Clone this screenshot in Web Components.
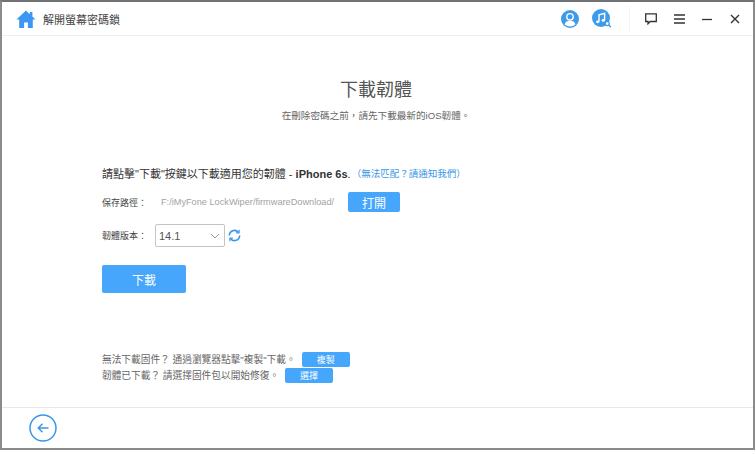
<!DOCTYPE html>
<html>
<head>
<meta charset="utf-8">
<style>
  html, body { margin: 0; background: #fff; }
  body { font-family: "Liberation Sans", "Noto Sans CJK TC", sans-serif; }
</style>
</head>
<body>
<app-window>
  <title-bar slot="top" heading="解開螢幕密碼鎖"></title-bar>
  <firmware-page></firmware-page>
  <page-footer slot="bottom"></page-footer>
</app-window>

<script>
const FONT = '"Liberation Sans", "Noto Sans CJK TC", sans-serif';

class AppWindow extends HTMLElement {
  constructor() {
    super();
    this.attachShadow({mode: 'open'});
    this.shadowRoot.innerHTML = `
    <style>
      :host { display: flex; flex-direction: column; width: 755px; height: 450px; box-sizing: border-box;
        border-top: 2px solid #6f7275; border-left: 2px solid #8b8b8b; border-right: 2px solid #8b8b8b;
        border-bottom: 2px solid #8b8b8b; background: #fff; overflow: hidden; }
      .main { flex: 1; min-height: 0; }
    </style>
    <slot name="top"></slot>
    <div class="main"><slot></slot></div>
    <slot name="bottom"></slot>`;
  }
}

class TitleBar extends HTMLElement {
  constructor() {
    super();
    this.attachShadow({mode: 'open'});
    this.shadowRoot.innerHTML = `
    <style>
      :host { display: flex; align-items: center; height: 34px; box-sizing: border-box; border-bottom: 1px solid #eeeeee;
        padding: 0 13px 0 14px; font-family: ${FONT}; }
      .title { margin-left: 7px; font-size: 11px; color: #444; }
      .grow { flex: 1; }
      svg { display: block; flex: none; }
      .sep { width: 1px; height: 24px; background: #f3f3f3; margin: 0 15px 0 17px; }
    </style>
    <svg width="20" height="18" viewBox="0 0 20 18">
      <path d="M10 .6 .4 9.400h2.800V18h4.900v-5.600h3.800V18h4.900V9.400h2.800L16.400 6.600V2h-2.600v2.200z" fill="#3b97f3"/>
    </svg>
    <span class="title"></span>
    <span class="grow"></span>
    <svg width="18" height="18" viewBox="0 0 18 18">
      <circle cx="9" cy="9" r="9" fill="#3d9bea"/>
      <circle cx="9" cy="6.800" r="3.200" fill="none" stroke="#fff" stroke-width="1.400"/>
      <path d="M3.600 14.400c.6-2.600 2.600-3.600 5.400-3.600s4.800 1 5.400 3.600c-1.500 1.300-3.300 2-5.400 2s-3.900-.7-5.400-2z" fill="#fff"/>
    </svg>
    <span style="width:13px"></span>
    <svg width="20" height="20" viewBox="0 0 20 20">
      <circle cx="9" cy="9" r="9" fill="#3d9bea"/>
      <path d="M7 12.600V5.800l5.600-1.400v6.800" fill="none" stroke="#fff" stroke-width="1.400"/>
      <ellipse cx="5.700" cy="12.800" rx="1.700" ry="1.400" fill="#fff"/>
      <ellipse cx="11.300" cy="11.400" rx="1.700" ry="1.400" fill="#fff"/>
      <circle cx="15.200" cy="14.600" r="2" fill="#fff" stroke="#3d9bea" stroke-width="1.200"/>
      <path d="M16.600 16l2.200 2.200" stroke="#3d9bea" stroke-width="1.400"/>
    </svg>
    <span class="sep"></span>
    <svg width="12" height="12" viewBox="0 0 12 12">
      <path d="M.7.9h10.600v7.600H5.200L3 10.800V8.500H.7z" fill="none" stroke="#333" stroke-width="1.300"/>
    </svg>
    <span style="width:17px"></span>
    <svg width="11" height="10" viewBox="0 0 11 10">
      <path d="M0 1h11M0 5h11M0 9h11" stroke="#333" stroke-width="1.300"/>
    </svg>
    <span style="width:17px"></span>
    <svg width="10" height="10" viewBox="0 0 10 10">
      <path d="M0 5.500h10" stroke="#333" stroke-width="1.300"/>
    </svg>
    <span style="width:18px"></span>
    <svg width="10" height="10" viewBox="0 0 10 10">
      <path d="M1 1l8 8M9 1l-8 8" stroke="#333" stroke-width="1.400"/>
    </svg>`;
    this.shadowRoot.querySelector('.title').textContent = this.getAttribute('heading');
  }
}

class BlueButton extends HTMLElement {
  constructor() {
    super();
    this.attachShadow({mode: 'open'});
    this.shadowRoot.innerHTML = `
    <style>
      :host { display: inline-flex; align-items: center; justify-content: center; box-sizing: border-box;
        background: #46a6fb; color: #fff; border-radius: 2px; font-family: ${FONT};
        width: var(--w, 52px); height: var(--h, 20px); font-size: var(--fs, 12px); cursor: pointer; }
    </style>
    <slot></slot>`;
  }
}

class VersionSelect extends HTMLElement {
  constructor() {
    super();
    this.attachShadow({mode: 'open'});
    this.shadowRoot.innerHTML = `
    <style>
      :host { display: inline-flex; align-items: center; justify-content: space-between; box-sizing: border-box;
        width: 70px; height: 23px; border: 1px solid #c4c4c4; border-radius: 2px; padding: 0 4px 0 3px;
        font-family: ${FONT}; font-size: 11px; color: #555; }
    </style>
    <slot></slot>
    <svg width="10" height="6" viewBox="0 0 10 6"><path d="M1 1l4 4 4-4" fill="none" stroke="#9a9a9a" stroke-width="1"/></svg>`;
  }
}

class FirmwarePage extends HTMLElement {
  constructor() {
    super();
    this.attachShadow({mode: 'open'});
    this.shadowRoot.innerHTML = `
    <style>
      :host { display: block; font-family: ${FONT}; color: #333; }
      .head { padding-top: 41px; text-align: center; padding-right: 3px; }
      h1 { margin: 0; font-size: 18px; line-height: 26px; font-weight: 400; color: #555; }
      .sub { margin-top: 6px; font-size: 9.600px; line-height: 14px; color: #666; }
      .body { padding: 43px 0 0 100px; }
      .lead { font-size: 11px; line-height: 16px; color: #333; display: flex; align-items: center; white-space: nowrap; }
      .lead a { margin-left: 1px; font-size: 9.500px; color: #3b97e8; }
      .row { display: flex; align-items: center; font-size: 9px; color: #444; white-space: nowrap; }
      .label { width: 53px; flex: none; }
      .path-row { margin-top: 10px; height: 20px; }
      .path { width: 193px; flex: none; padding-left: 6px; box-sizing: border-box; font-size: 9.200px; color: #a3a3a3; }
      .ver-row { margin-top: 12px; height: 23px; }
      .ver-row svg { margin-left: 3px; }
      .dl { margin-top: 18px; --w: 84px; --h: 28px; --fs: 12px; display: flex; }
      .help { margin-top: 58px; font-size: 9.700px; color: #666; }
      .help .line { display: flex; align-items: center; height: 16px; white-space: nowrap; }
      .help blue-button { --w: 48px; --h: 15px; --fs: 9px; margin-left: 6px; }
    </style>
    <div class="head">
      <h1>下載韌體</h1>
      <div class="sub">在刪除密碼之前，請先下載最新的iOS韌體。</div>
    </div>
    <div class="body">
      <div class="lead">請點擊"下載"按鍵以下載適用您的韌體 -&nbsp;<b>iPhone 6s</b>.<a>（無法匹配？請通知我們）</a></div>
      <div class="row path-row">
        <span class="label">保存路徑：</span>
        <span class="path">F:/iMyFone LockWiper/firmwareDownload/</span>
        <blue-button>打開</blue-button>
      </div>
      <div class="row ver-row">
        <span class="label">韌體版本：</span>
        <version-select>14.1</version-select>
        <svg width="13" height="13" viewBox="0 0 14 14" fill="none" stroke="#3b97e8" stroke-width="1.700">
          <path d="M1.500 7a5.500 5.500 0 0 1 9.700-3.500"/>
          <path d="M12.500 7a5.500 5.500 0 0 1-9.700 3.500"/>
          <path d="M12 .8v3.400H8.800M2 13.200V9.800h3.200" stroke-width="1.200"/>
        </svg>
      </div>
      <blue-button class="dl">下載</blue-button>
      <div class="help">
        <div class="line">無法下載固件？ 通過瀏覽器點擊"複製"下載。<blue-button>複製</blue-button></div>
        <div class="line">韌體已下載？ 請選擇固件包以開始修復。<blue-button>選擇</blue-button></div>
      </div>
    </div>`;
  }
}

class PageFooter extends HTMLElement {
  constructor() {
    super();
    this.attachShadow({mode: 'open'});
    this.shadowRoot.innerHTML = `
    <style>
      :host { display: flex; align-items: center; height: 41px; box-sizing: border-box; border-top: 1px solid #e8e8e8; padding-left: 27px; }
      svg { display: block; }
    </style>
    <svg width="28" height="28" viewBox="0 0 28 28" fill="none" stroke="#3b97e8">
      <circle cx="14" cy="14" r="13" stroke-width="1.500"/>
      <path d="M19.500 14H9.500M13.500 9.800 9.300 14l4.200 4.200" stroke-width="1.500"/>
    </svg>`;
  }
}

customElements.define('app-window', AppWindow);
customElements.define('title-bar', TitleBar);
customElements.define('blue-button', BlueButton);
customElements.define('version-select', VersionSelect);
customElements.define('firmware-page', FirmwarePage);
customElements.define('page-footer', PageFooter);
</script>
</body>
</html>
